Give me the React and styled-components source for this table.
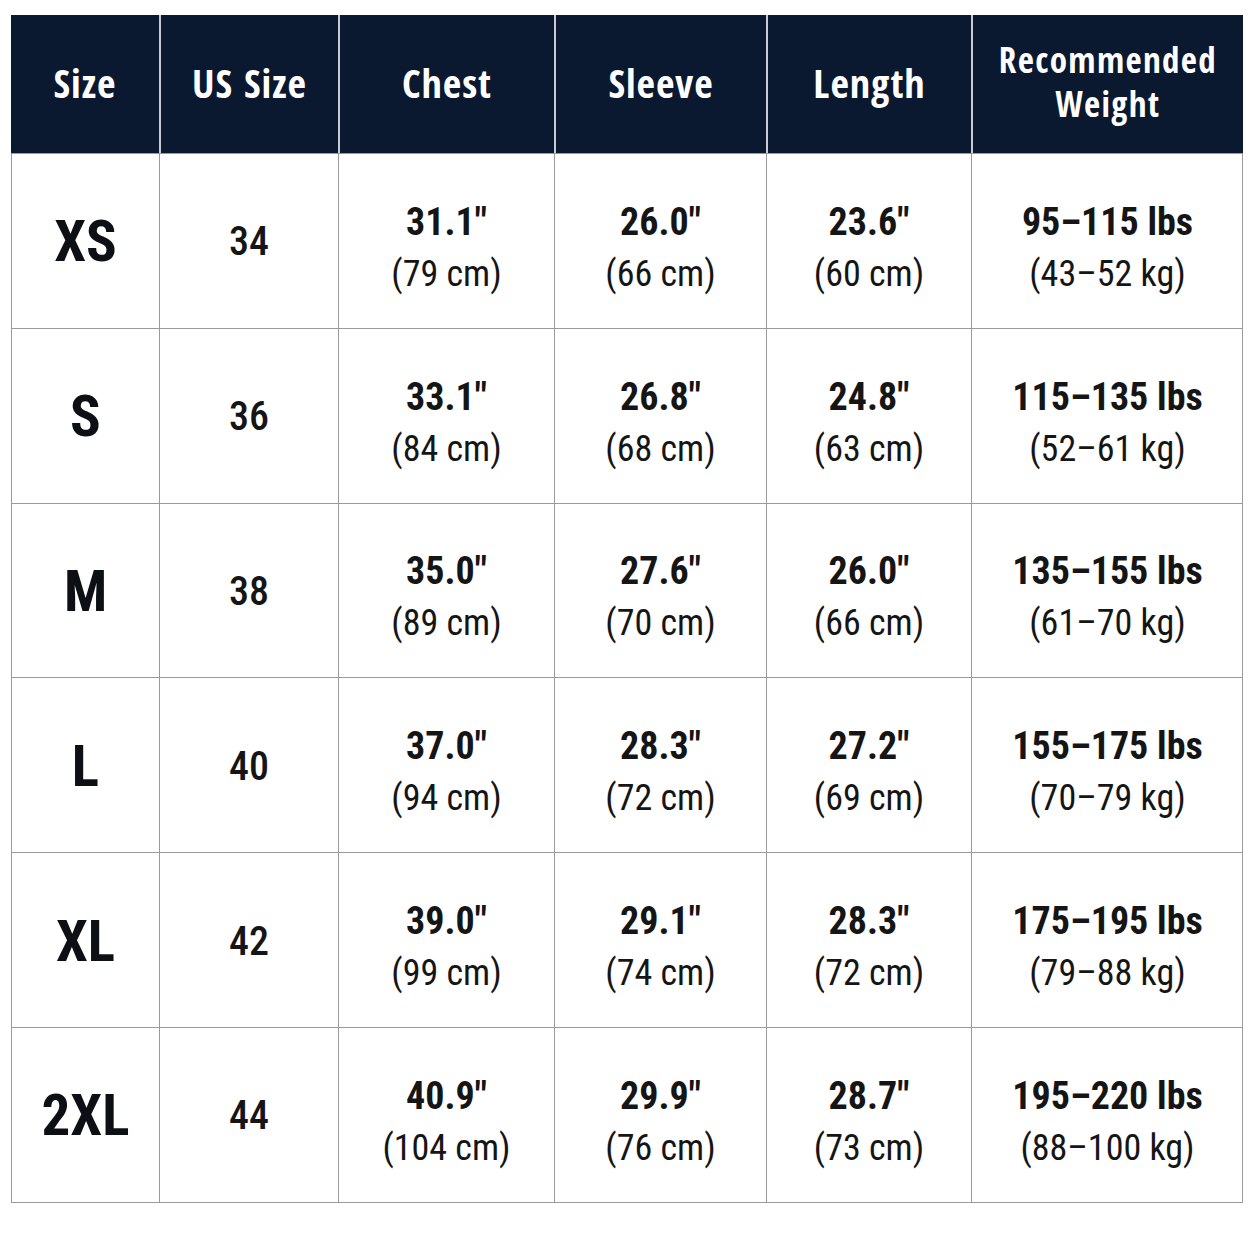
import React from "react";
import styled, { createGlobalStyle } from "styled-components";

const Global = createGlobalStyle`
  html, body { margin: 0; padding: 0; background: #ffffff; }
  body { font-family: "Roboto Condensed", "Roboto", "Liberation Sans", sans-serif; }
`;

const Page = styled.div`
  padding: 15px 11px 0 11px;
  width: 1254px;
  box-sizing: border-box;
`;

const Grid = styled.div`
  display: grid;
  width: 1232px;
  grid-template-columns: 148px 179px 216px 212px 205px 272px;
  grid-template-rows: 138px repeat(6, 174.8px);
  border-right: 1px solid #9a9a9a;
  border-bottom: 1px solid #9a9a9a;
  box-sizing: border-box;
`;

const HeadCell = styled.div`
  background: #0a1930;
  color: #ffffff;
  display: flex;
  align-items: center;
  justify-content: center;
  text-align: center;
  font-family: "Open Sans Condensed", "Roboto Condensed", sans-serif;
  font-weight: 700;
  font-size: ${(p) => (p.$small ? "35px" : "40px")};
  letter-spacing: ${(p) => (p.$small ? "1.4px" : "1px")};
  line-height: ${(p) => (p.$small ? "44px" : "1.1")};
  border-left: ${(p) => (p.$first ? "none" : "2px solid #c8ccd2")};
  box-sizing: border-box;
  padding-bottom: ${(p) => (p.$small ? "4px" : "2px")};
`;

const Cell = styled.div`
  display: flex;
  flex-direction: column;
  align-items: center;
  justify-content: center;
  text-align: center;
  border-left: 1px solid #9a9a9a;
  border-top: 1px solid #9a9a9a;
  color: #151515;
  box-sizing: border-box;
  padding-top: ${(p) => (p.$pair ? "14px" : "2px")};
`;

const SizeLabel = styled.span`
  font-size: 57px;
  font-weight: 700;
  color: #0c0f14;
`;

const UsSize = styled.span`
  font-size: 40px;
  font-weight: 500;
`;

const Main = styled.span`
  font-size: 38px;
  font-weight: 700;
  line-height: 52px;
`;

const Sub = styled.span`
  font-size: 36px;
  font-weight: 400;
  line-height: 52px;
`;

const headers = ["Size", "US Size", "Chest", "Sleeve", "Length"];

const rows = [
  ["XS", "34", ["31.1\"", "(79 cm)"], ["26.0\"", "(66 cm)"], ["23.6\"", "(60 cm)"], ["95–115 lbs", "(43–52 kg)"]],
  ["S", "36", ["33.1\"", "(84 cm)"], ["26.8\"", "(68 cm)"], ["24.8\"", "(63 cm)"], ["115–135 lbs", "(52–61 kg)"]],
  ["M", "38", ["35.0\"", "(89 cm)"], ["27.6\"", "(70 cm)"], ["26.0\"", "(66 cm)"], ["135–155 lbs", "(61–70 kg)"]],
  ["L", "40", ["37.0\"", "(94 cm)"], ["28.3\"", "(72 cm)"], ["27.2\"", "(69 cm)"], ["155–175 lbs", "(70–79 kg)"]],
  ["XL", "42", ["39.0\"", "(99 cm)"], ["29.1\"", "(74 cm)"], ["28.3\"", "(72 cm)"], ["175–195 lbs", "(79–88 kg)"]],
  ["2XL", "44", ["40.9\"", "(104 cm)"], ["29.9\"", "(76 cm)"], ["28.7\"", "(73 cm)"], ["195–220 lbs", "(88–100 kg)"]],
];

export default function App() {
  return (
    <>
      <Global />
      <Page>
        <Grid>
          {headers.map((h, i) => (
            <HeadCell key={h} $first={i === 0}>{h}</HeadCell>
          ))}
          <HeadCell $small>Recommended<br />Weight</HeadCell>
          {rows.map((r) => (
            <React.Fragment key={r[0]}>
              <Cell><SizeLabel>{r[0]}</SizeLabel></Cell>
              <Cell><UsSize>{r[1]}</UsSize></Cell>
              {r.slice(2).map((pair, j) => (
                <Cell key={j} $pair>
                  <Main>{pair[0]}</Main>
                  <Sub>{pair[1]}</Sub>
                </Cell>
              ))}
            </React.Fragment>
          ))}
        </Grid>
      </Page>
    </>
  );
}
